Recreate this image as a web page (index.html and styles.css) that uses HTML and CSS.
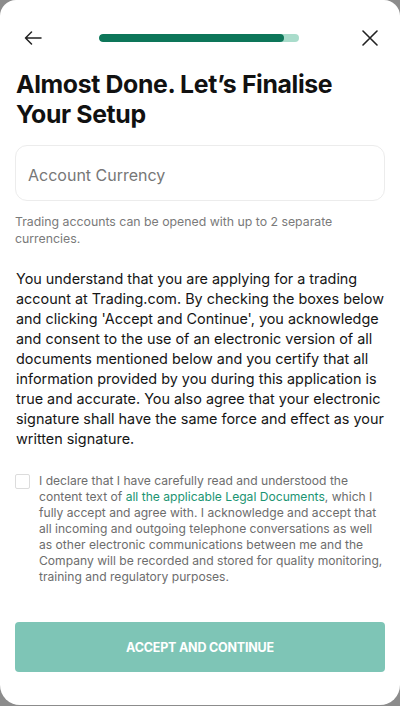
FILE: index.html
```html
<!DOCTYPE html>
<html lang="en">
<head>
<meta charset="utf-8">
<title>Finalise Setup</title>
<link rel="stylesheet" href="styles.css">
</head>
<body>
<div class="card">
  <header class="topbar">
    <button class="icon-btn" aria-label="Back">
      <svg width="18" height="14" viewBox="0 0 18 14" fill="none" stroke="#222" stroke-width="1.5" stroke-linecap="round" stroke-linejoin="round"><path d="M17 7H1.5M7.5 1L1.5 7l6 6"/></svg>
    </button>
    <div class="progress"><div class="progress-fill"></div></div>
    <button class="icon-btn" aria-label="Close">
      <svg width="16" height="16" viewBox="0 0 16 16" fill="none" stroke="#222" stroke-width="1.6" stroke-linecap="round"><path d="M1 1l14 14M15 1L1 15"/></svg>
    </button>
  </header>

  <h1 class="title">Almost Done. Let’s Finalise Your Setup</h1>

  <div class="field">Account Currency</div>
  <p class="hint">Trading accounts can be opened with up to 2 separate currencies.</p>

  <p class="terms">You understand that you are applying for a trading account at Trading.com. By checking the boxes below and clicking 'Accept and Continue', you acknowledge and consent to the use of an electronic version of all documents mentioned below and you certify that all information provided by you during this application is true and accurate. You also agree that your electronic signature shall have the same force and effect as your written signature.</p>

  <label class="check-row">
    <span class="checkbox"></span>
    <span class="check-text">I declare that I have carefully read and understood the content text of <span class="link">all the applicable Legal Documents</span>, which I fully accept and agree with. I acknowledge and accept that all incoming and outgoing telephone conversations as well as other electronic communications between me and the Company will be recorded and stored for quality monitoring, training and regulatory purposes.</span>
  </label>

  <button class="cta">ACCEPT AND CONTINUE</button>
</div>
</body>
</html>
```

FILE: styles.css
```css
* { box-sizing: border-box; }
html, body { margin: 0; padding: 0; }
body {
  background: #8c8c8c;
  font-family: Inter, "Noto Sans", sans-serif;
  width: 400px;
  height: 706px;
  overflow: hidden;
}
.card {
  background: #fff;
  height: 705px;
  border-radius: 16px 16px 20px 20px;
  padding: 0 15px;
  display: flex;
  flex-direction: column;
}
.topbar {
  display: flex;
  align-items: center;
  justify-content: space-between;
  height: 38px;
  margin-top: 19px;
  padding: 0 6px 0 9px;
}
.icon-btn {
  background: none;
  border: 0;
  padding: 0;
  width: 18px;
  height: 18px;
  display: flex;
  align-items: center;
  justify-content: center;
}
.progress {
  width: 200px;
  height: 8px;
  border-radius: 4px;
  background: #a9dccb;
  overflow: hidden;
  margin-right: 6px;
}
.progress-fill {
  width: 185px;
  height: 100%;
  background: #0d7659;
  border-radius: 4px;
}
.title {
  margin: 12px 0 0 1px;
  font-size: 24.8px;
  line-height: 30px;
  font-weight: 700;
  color: #111;
  letter-spacing: -0.35px;
}
.field {
  margin-top: 16px;
  height: 56px;
  border: 1px solid #ececec;
  border-radius: 12px;
  display: flex;
  align-items: center;
  padding: 3px 0 0 12px;
  font-size: 16px;
  color: #777;
}
.hint {
  margin: 12px 0 0 0;
  font-size: 12.3px;
  line-height: 17px;
  color: #7a7a7a;
}
.terms {
  margin: 22px 0 0 1px;
  font-size: 14.4px;
  line-height: 20px;
  color: #161616;
}
.check-row {
  display: flex;
  align-items: flex-start;
  margin-top: 24px;
}
.checkbox {
  flex: none;
  width: 15px;
  height: 15px;
  border: 1px solid #dcdcdc;
  border-radius: 2px;
  margin-top: 1px;
  margin-right: 9px;
}
.check-text {
  font-size: 12.1px;
  line-height: 16px;
  color: #6d6d6d;
}
.link {
  color: #1b9472;
}
.cta {
  margin-top: auto;
  margin-bottom: 33px;
  height: 50px;
  border: 0;
  border-radius: 4px;
  background: #7ec5b6;
  color: #fff;
  font-family: Inter, "Noto Sans", sans-serif;
  font-weight: 700;
  font-size: 12.5px;
  letter-spacing: -0.2px;
}
```
